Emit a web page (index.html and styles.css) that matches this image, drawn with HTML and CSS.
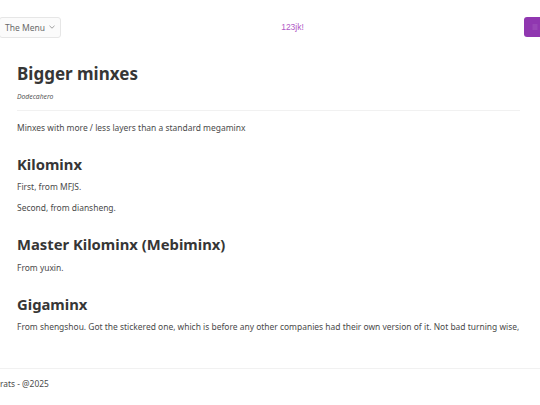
FILE: index.html
```html
<!DOCTYPE html>
<html lang="en">
<head>
<meta charset="utf-8">
<title>Bigger minxes</title>
<link rel="stylesheet" href="styles.css">
</head>
<body>
<nav class="nav">
  <button class="menu-btn">The Menu <span class="chev"><svg width="6" height="4" viewBox="0 0 6 4"><path d="M0.5 0.8 L3 3.2 L5.5 0.8" fill="none" stroke="#888" stroke-width="0.8"/></svg></span></button>
  <span class="brand">123jk!</span>
  <button class="action-btn" aria-label="action"><svg width="8" height="8" viewBox="0 0 8 8"><path d="M1.5 2 H6.5 M1.5 4 H6.5 M1.5 6 H6.5" fill="none" stroke="#a55cc0" stroke-width="0.9"/></svg></button>
</nav>
<main class="content">
  <h1 class="title">Bigger minxes</h1>
  <p class="author">Dodecahero</p>
  <hr class="rule">
  <p class="text lead">Minxes with more / less layers than a standard megaminx</p>
  <h2 class="sub">Kilominx</h2>
  <p class="text">First, from MFJS.</p>
  <p class="text">Second, from diansheng.</p>
  <h2 class="sub">Master Kilominx (Mebiminx)</h2>
  <p class="text">From yuxin.</p>
  <h2 class="sub">Gigaminx</h2>
  <p class="text">From shengshou. Got the stickered one, which is before any other companies had their own version of it. Not bad turning wise,</p>
</main>
<footer class="footer">
  <p class="foot-text">rats - @2025</p>
</footer>
</body>
</html>
```

FILE: styles.css
```css
html, body {
  margin: 0;
  padding: 0;
  background: #ffffff;
  overflow: hidden;
}
body {
  font-family: "Noto Sans", "Open Sans", sans-serif;
  color: #4a4a4a;
  width: 540px;
}
.nav {
  height: 54px;
  display: flex;
  align-items: center;
  justify-content: space-between;
}
.menu-btn {
  height: 21px;
  margin-left: -1px;
  padding: 0 5px;
  border: 1px solid #e6e6e6;
  border-radius: 3px;
  background: #fbfbfb;
  font-family: "Noto Sans", sans-serif;
  font-size: 8.5px;
  color: #6a6a6a;
  display: flex;
  align-items: center;
  gap: 4px;
}
.chev {
  display: flex;
  align-items: center;
}
.brand {
  font-family: "Liberation Sans", Arial, sans-serif;
  font-size: 8.5px;
  color: #b05ac6;
}
.action-btn {
  width: 22px;
  height: 20px;
  margin-right: -6px;
  padding: 0;
  border: none;
  border-radius: 3px;
  background: #9037b0;
  display: flex;
  align-items: center;
  justify-content: center;
}
.content {
  width: 514px;
  padding: 8px 0 0 17px;
}
.title {
  margin: 0;
  font-size: 17px;
  line-height: 24px;
  font-weight: 700;
  color: #363636;
}
.author {
  margin: 6px 0 0;
  font-size: 6.8px;
  line-height: 10px;
  font-style: italic;
  color: #555;
}
.rule {
  margin: 8px 0 0;
  width: 503px;
  border: 0;
  border-top: 1px solid #f1f1f1;
}
.text {
  margin: 8px 0 0;
  font-size: 8.45px;
  line-height: 13px;
  color: #4a4a4a;
}
.lead {
  margin-top: 9.5px;
}
.sub {
  margin: 20px 0 0;
  font-size: 14.8px;
  line-height: 20px;
  font-weight: 700;
  color: #363636;
}
.sub + .text {
  margin-top: 6.5px;
}
.footer {
  margin-top: 35px;
  border-top: 1px solid #f1f1f1;
  padding-top: 8px;
}
.foot-text {
  margin: 0;
  font-size: 8.4px;
  line-height: 13px;
  color: #4a4a4a;
}
```
